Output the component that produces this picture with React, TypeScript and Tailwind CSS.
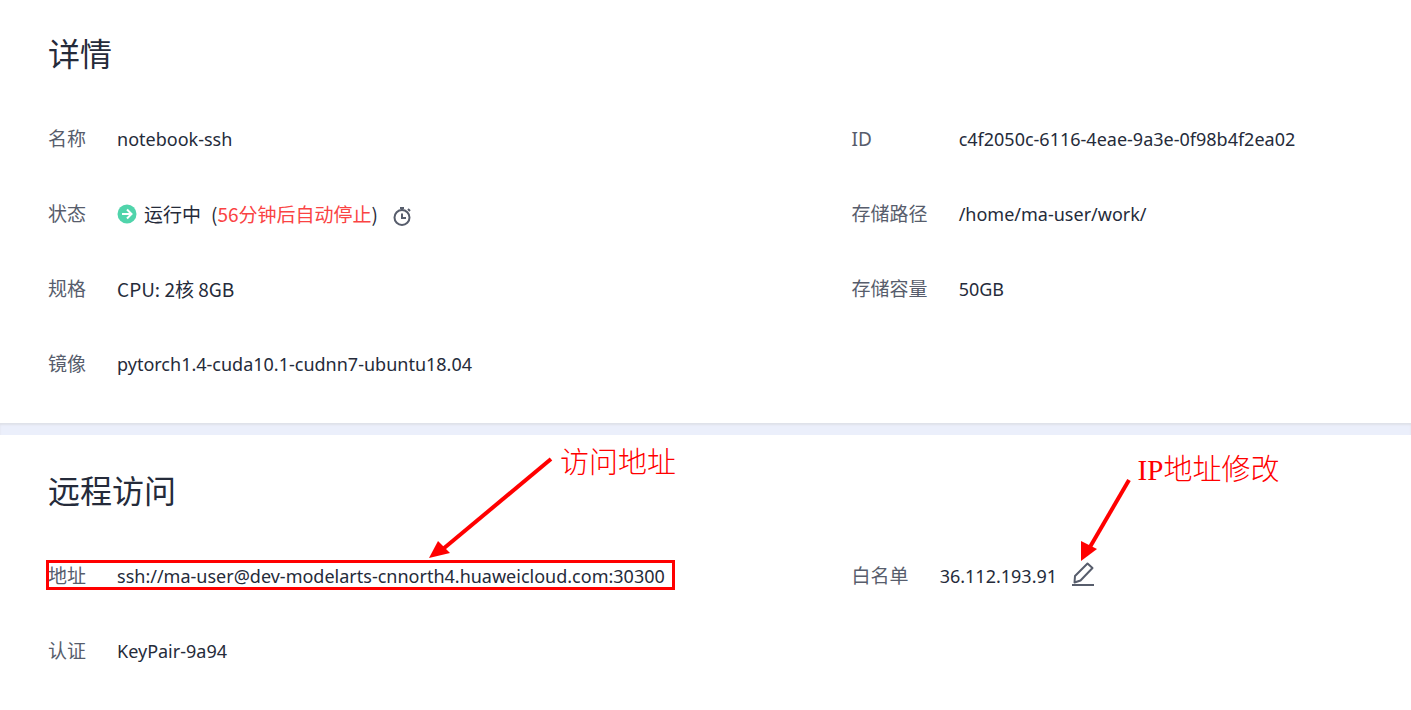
import React from 'react';

interface Field {
  label: string;
  value: React.ReactNode;
  // values that mix Chinese and latin text use the CJK face throughout
  mixed?: boolean;
}

function FieldList({ fields }: { fields: Field[] }) {
  return (
    <dl className="grid grid-cols-[auto_1fr] content-start gap-x-[31px] gap-y-[47px] leading-7">
      {fields.map((field) => (
        <React.Fragment key={field.label}>
          <dt className="text-[19px] leading-7 whitespace-nowrap text-[#575d6c]">{field.label}</dt>
          <dd
            className={`whitespace-nowrap text-[#252b3a] ${
              field.mixed
                ? "font-['Noto_Sans_CJK_SC',sans-serif] text-[19px] leading-7"
                : 'text-[18px] leading-7'
            }`}
          >
            {field.value}
          </dd>
        </React.Fragment>
      ))}
    </dl>
  );
}

function RunningIcon() {
  return (
    <svg viewBox="0 0 20 20" className="h-5 w-5 shrink-0" fill="none" aria-hidden="true">
      <circle cx="10" cy="10" r="9.5" fill="#50d4ab" />
      <path d="M5 10h9M10 5.5l4.5 4.5-4.5 4.5" stroke="#fff" strokeWidth="2" />
    </svg>
  );
}

function TimerIcon() {
  return (
    <svg viewBox="0 0 20 24" className="h-6 w-5" fill="none" stroke="#575d6c" aria-hidden="true">
      <circle cx="10" cy="15.5" r="7.5" strokeWidth="2" />
      <path d="M10 11.5V16h4" strokeWidth="2" />
      <path d="M8 6h4M10 5.5v3M16 7l2 2" strokeWidth="2" />
    </svg>
  );
}

function EditIcon() {
  return (
    <svg viewBox="0 0 24 28" className="h-7 w-6" fill="none" stroke="#575d6c" aria-hidden="true">
      <path d="M16.5 1.5 21.5 6 9.5 18.5 3.5 20.5 4 14z" strokeWidth="2" strokeLinejoin="round" />
      <path d="M1 23h22" strokeWidth="2" />
    </svg>
  );
}

const detailLeft: Field[] = [
  { label: '名称', value: 'notebook-ssh' },
  {
    label: '状态',
    mixed: true,
    value: (
      <span className="flex h-7 items-center">
        <RunningIcon />
        <span className="ml-[7px]">运行中</span>
        <span className="ml-[10px]">
          (<span className="text-[#fa4343]">56分钟后自动停止</span>)
        </span>
        <button type="button" aria-label="设置自动停止" className="ml-[14px]">
          <TimerIcon />
        </button>
      </span>
    ),
  },
  { label: '规格', value: 'CPU: 2核 8GB', mixed: true },
  { label: '镜像', value: 'pytorch1.4-cuda10.1-cudnn7-ubuntu18.04' },
];

const detailRight: Field[] = [
  { label: 'ID', value: 'c4f2050c-6116-4eae-9a3e-0f98b4f2ea02' },
  { label: '存储路径', value: '/home/ma-user/work/' },
  { label: '存储容量', value: '50GB' },
];

const remoteLeft: Field[] = [
  { label: '地址', value: 'ssh://ma-user@dev-modelarts-cnnorth4.huaweicloud.com:30300' },
  { label: '认证', value: 'KeyPair-9a94' },
];

const remoteRight: Field[] = [
  {
    label: '白名单',
    value: (
      <span className="flex h-7 items-center">
        36.112.193.91
        <button type="button" aria-label="修改白名单" className="ml-[14px]">
          <EditIcon />
        </button>
      </span>
    ),
  },
];

export default function App() {
  return (
    <main className="min-h-screen bg-white font-['Noto_Sans','Noto_Sans_CJK_SC',sans-serif]">
      <section className="px-12 pt-[30px] pb-[45px]">
        <h2 className="text-[32px] leading-[48px] text-[#252b3a]">详情</h2>
        <div className="mt-[47px] grid grid-cols-[11fr_7fr]">
          <FieldList fields={detailLeft} />
          <FieldList fields={detailRight} />
        </div>
      </section>

      <div className="h-3 bg-[#ebeffb] shadow-[inset_0_2px_2px_#dfe1e9]" />

      <section className="px-12 pt-8 pb-[45px]">
        <h2 className="text-[32px] leading-[48px] text-[#252b3a]">远程访问</h2>
        <div className="mt-[47px] grid grid-cols-[11fr_7fr]">
          <div className="relative">
            <FieldList fields={remoteLeft} />
            {/* highlight and callout for the ssh address */}
            <div className="pointer-events-none absolute -top-[2px] -left-[2px] h-[30px] w-[629px] border-[3px] border-[#ff0000]" />
            <svg
              viewBox="0 0 126 104"
              className="pointer-events-none absolute -top-[107px] left-[381px] h-[104px] w-[126px]"
              aria-hidden="true"
            >
              <path d="M122 4 14 94" stroke="#ff0000" strokeWidth="4" />
              <path d="M0 103 9 86l12 12z" fill="#ff0000" />
            </svg>
            <p className="absolute -top-[119px] left-[512px] font-['Liberation_Serif','Noto_Sans_CJK_SC',serif] text-[29px] leading-10 font-light whitespace-nowrap text-[#ff0000]">
              访问地址
            </p>
          </div>
          <div className="relative">
            <FieldList fields={remoteRight} />
            {/* callout for the edit button */}
            <svg
              viewBox="0 0 52 86"
              className="pointer-events-none absolute -top-[85px] left-[228px] h-[86px] w-[52px]"
              aria-hidden="true"
            >
              <path d="M49 3 10 70" stroke="#ff0000" strokeWidth="4" />
              <path d="M1 84V64l16 8z" fill="#ff0000" />
            </svg>
            <p className="absolute -top-[112px] left-[286px] font-['Liberation_Serif','Noto_Sans_CJK_SC',serif] text-[29px] leading-10 font-light whitespace-nowrap text-[#ff0000]">
              IP地址修改
            </p>
          </div>
        </div>
      </section>
    </main>
  );
}
